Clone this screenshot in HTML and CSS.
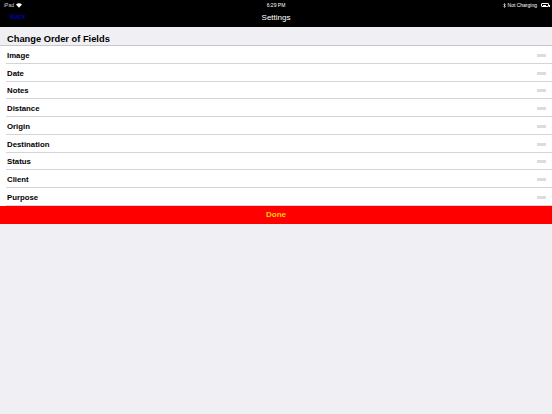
FILE: index.html
```html
<!DOCTYPE html>
<html lang="en">
<head>
<meta charset="utf-8">
<title>Settings</title>
<link rel="stylesheet" href="styles.css">
</head>
<body>
<div class="top">
  <div class="status">
    <div class="status-left">
      <span>iPad</span>
      <svg class="wifi" width="6" height="5" viewBox="0 0 12 9">
        <path d="M6 9 L0 2.5 A9 9 0 0 1 12 2.5 Z" fill="#fff"/>
      </svg>
    </div>
    <div class="status-time">6:29 PM</div>
    <div class="status-right">
      <svg class="bt" width="3" height="5" viewBox="0 0 6 10">
        <path d="M1 3 L5 7 L3 9 V1 L5 3 L1 7" fill="none" stroke="#fff" stroke-width="1.2"/>
      </svg>
      <span>Not Charging</span>
      <span class="battery"><span class="battery-level"></span></span>
    </div>
  </div>
  <div class="navbar">
    <span class="back">Back</span>
    <span class="title">Settings</span>
  </div>
</div>

<div class="section-head">Change Order of Fields</div>
<ul class="list">
  <li class="row"><span>Image</span><span class="grip"></span></li>
  <li class="row"><span>Date</span><span class="grip"></span></li>
  <li class="row"><span>Notes</span><span class="grip"></span></li>
  <li class="row"><span>Distance</span><span class="grip"></span></li>
  <li class="row"><span>Origin</span><span class="grip"></span></li>
  <li class="row"><span>Destination</span><span class="grip"></span></li>
  <li class="row"><span>Status</span><span class="grip"></span></li>
  <li class="row"><span>Client</span><span class="grip"></span></li>
  <li class="row"><span>Purpose</span><span class="grip"></span></li>
</ul>
<div class="done">Done</div>
</body>
</html>
```

FILE: styles.css
```css
html, body {
  margin: 0;
  padding: 0;
  background: #efeff4;
  font-family: "Liberation Sans", Arial, sans-serif;
  width: 552px;
  height: 414px;
  overflow: hidden;
}

.top {
  background: #000;
  color: #fff;
  height: 27px;
  display: flex;
  flex-direction: column;
}

.status {
  height: 10px;
  display: flex;
  align-items: center;
  justify-content: space-between;
  font-size: 5px;
  padding: 0 3px 0 4px;
  position: relative;
}

.status-left, .status-right {
  display: flex;
  align-items: center;
  gap: 2px;
}

.status-left span {
  color: #ccc;
}

.status-time {
  position: absolute;
  left: 0;
  right: 0;
  text-align: center;
  top: 2px;
}

.battery {
  width: 8px;
  height: 4px;
  border: 0.6px solid #fff;
  border-radius: 1px;
  margin-left: 2px;
  display: flex;
  padding: 0.5px;
  box-sizing: border-box;
  position: relative;
}

.battery::after {
  content: "";
  position: absolute;
  right: -2px;
  top: 1px;
  width: 1px;
  height: 1.5px;
  background: #fff;
}

.battery-level {
  width: 60%;
  background: #fff;
}

.navbar {
  flex: 1;
  display: flex;
  align-items: center;
  justify-content: center;
  position: relative;
  padding-bottom: 2px;
}

.back {
  position: absolute;
  left: 10px;
  top: 3px;
  color: #0000c8;
  font-size: 7px;
}

.title {
  font-size: 8px;
}

.section-head {
  height: 19px;
  box-sizing: border-box;
  padding: 7px 0 0 7px;
  font-size: 9.3px;
  line-height: 10px;
  font-weight: bold;
  color: #000;
  border-bottom: 1px solid #c8c7cc;
}

.list {
  list-style: none;
  margin: 0;
  padding: 0;
  background: #fff;
}

.row {
  height: 17.75px;
  box-sizing: border-box;
  display: flex;
  align-items: center;
  justify-content: space-between;
  padding: 1px 6px 0 7px;
  font-size: 7.8px;
  font-weight: bold;
  color: #000;
  position: relative;
}

.row::after {
  content: "";
  position: absolute;
  left: 6px;
  right: 0;
  bottom: 0;
  height: 1px;
  background: #d4d3d8;
}

/* reorder handle: three faint stacked bars */
.grip {
  width: 9px;
  height: 3px;
  background: repeating-linear-gradient(to bottom, #dcdce0 0, #dcdce0 0.8px, #ececef 0.8px, #ececef 1.1px);
}

.done {
  background: #ff0000;
  color: #ffd200;
  font-weight: bold;
  font-size: 8px;
  height: 18px;
  display: flex;
  align-items: center;
  justify-content: center;
}
```
